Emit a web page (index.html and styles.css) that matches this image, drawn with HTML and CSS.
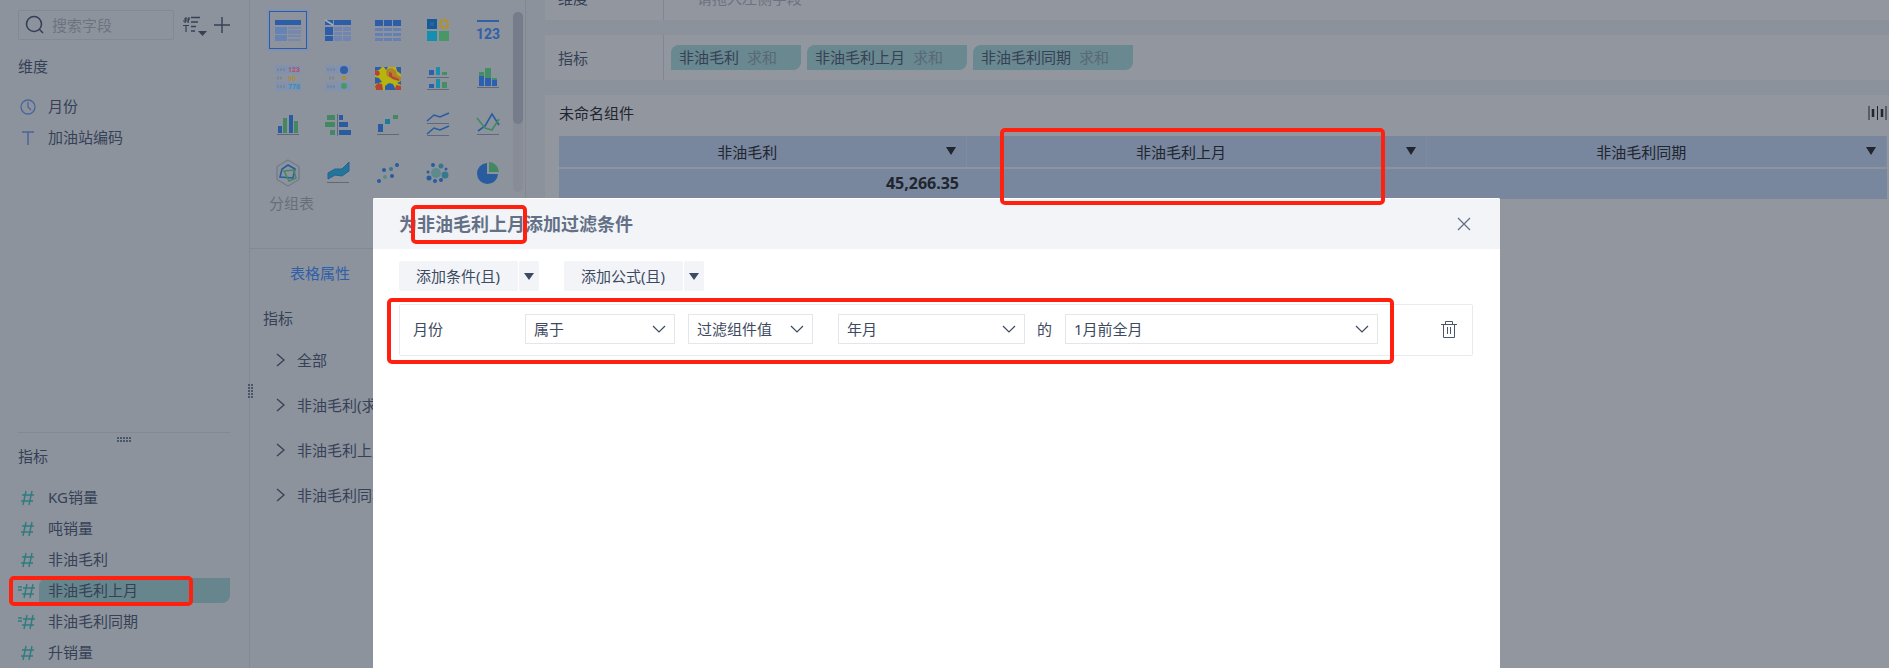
FILE: index.html
```html
<!DOCTYPE html>
<html lang="zh-CN">
<head>
    <meta charset="UTF-8">
    <meta name="viewport" content="width=device-width, initial-scale=1.0">
    <title>未命名组件</title>
    <link rel="stylesheet" href="styles.css">
</head>
<body>
    <div class="app">
        <!-- fields -->
        <aside class="fields">
            <section class="dimensions">
                <div class="search-row">
                    <div class="search">
                        <svg width="20" height="20" viewBox="0 0 20 20" fill="none" stroke="#364156" stroke-width="1.6"><circle cx="9" cy="9" r="7.500"/><path d="M14 14l4 4"/></svg>
                        <input type="text" placeholder="搜索字段" aria-label="搜索字段">
                    </div>
                    <button class="icon-btn sort" aria-label="排序">
                        <svg width="26" height="22" viewBox="0 0 26 22" fill="none" stroke="#364156"><path d="M3 1L2 7M6 1L5 7M1 3h6M0 5h6M0 9.500h6M3 10v6" stroke-width="1.2"/><path d="M8 1.500h9M8 6h7M8 10.500h5M8 15h4" stroke-width="1.6"/><path d="M15 15h9l-4.500 5z" fill="#364156" stroke="none"/></svg>
                    </button>
                    <button class="icon-btn" aria-label="添加">
                        <svg width="16" height="16" viewBox="0 0 16 16" stroke="#364156" stroke-width="1.4"><path d="M8 0v16M0 8h16"/></svg>
                    </button>
                </div>
                <h2>维度</h2>
                <ul class="field-list dims">
                    <li>
                        <svg width="16" height="16" viewBox="0 0 16 16" fill="none" stroke="#4a659c" stroke-width="1.3"><circle cx="8" cy="8" r="7"/><path d="M8 3v5l3 3"/></svg>
                        <span>月份</span>
                    </li>
                    <li>
                        <svg width="16" height="16" viewBox="0 0 16 16" fill="none" stroke="#4a659c" stroke-width="1.5"><path d="M2 2h12M8 2v13"/></svg>
                        <span>加油站编码</span>
                    </li>
                </ul>
            </section>
            <section class="measures">
                <svg class="grip" viewBox="0 0 15 5"><path d="M0 1h15M0 4h15"/></svg>
                <h2>指标</h2>
                <ul class="field-list">
                    <li><svg class="hash" viewBox="0 0 18 16"><path d="M8 1L5 15M14 1l-3 14M4 5h12M3 11h12"/></svg><span>KG销量</span></li>
                    <li><svg class="hash" viewBox="0 0 18 16"><path d="M8 1L5 15M14 1l-3 14M4 5h12M3 11h12"/></svg><span>吨销量</span></li>
                    <li><svg class="hash" viewBox="0 0 18 16"><path d="M8 1L5 15M14 1l-3 14M4 5h12M3 11h12"/></svg><span>非油毛利</span></li>
                    <li class="selected"><svg class="hash" viewBox="0 0 18 16"><path d="M9 1L6 15M15 1l-3 14M5 5h12M4 11h12M0 4h4M0 7h4"/></svg><span>非油毛利上月</span><i class="mark mark-field"></i></li>
                    <li><svg class="hash" viewBox="0 0 18 16"><path d="M9 1L6 15M15 1l-3 14M5 5h12M4 11h12M0 4h4M0 7h4"/></svg><span>非油毛利同期</span></li>
                    <li><svg class="hash" viewBox="0 0 18 16"><path d="M8 1L5 15M14 1l-3 14M4 5h12M3 11h12"/></svg><span>升销量</span></li>
                </ul>
            </section>
            <svg class="resize" viewBox="0 0 5 15"><path d="M1 0v15M4 0v15"/></svg>
        </aside>

        <!-- chart types and properties -->
        <aside class="props">
            <div class="charts">
                <div class="chart-grid">
                    <button class="active" aria-label="分组表"><svg viewBox="0 0 26 26"><path fill="#2b5da9" d="M0 3h26v5H0z"/><path fill="#6583b4" d="M0 10h12v7H0zM0 18h12v6H0z"/><path fill="#7689ad" d="M13 10h13v2H13zM13 13h13v4H13zM13 18h13v2H13zM13 22h13v2H13z"/></svg></button>
                    <button aria-label="交叉表"><svg viewBox="0 0 26 26"><path fill="#2b5da9" d="M0 3h8v5H0zM9 3h17v5H9zM0 10h8v8H0zM0 19h8v5H0z"/><path stroke="#a5adba" stroke-width="1.500" d="M0 3l8 5"/><path fill="#7185b0" d="M9 10h8v4H9zM18 10h8v4h-8zM9 15h8v3H9zM18 15h8v3h-8zM9 19h8v5H9zM18 19h8v5h-8z"/></svg></button>
                    <button aria-label="明细表"><svg viewBox="0 0 26 26"><path fill="#2b5da9" d="M0 3h8v6H0zM9 3h8v6H9zM18 3h8v6h-8z"/><path fill="#6680b2" d="M0 11h8v3H0zM9 11h8v3H9zM18 11h8v3h-8zM0 16h8v3H0zM9 16h8v3H9zM18 16h8v3h-8zM0 21h8v3H0zM9 21h8v3H9zM18 21h8v3h-8z"/></svg></button>
                    <button aria-label="颜色表"><svg viewBox="0 0 26 26"><path fill="#145c99" d="M2 2h10v10H2z"/><path fill="#315f9f" d="M5 5h4v4H5z"/><path fill="none" stroke="#b1902f" stroke-width="3" stroke-dasharray="2.500 1" d="M15.500 3.500h7v7h-7z"/><path fill="#168eaf" d="M2 14h10v10H2z"/><path fill="#499767" d="M14 14h10v10H14z"/></svg></button>
                    <button aria-label="KPI指标卡"><svg viewBox="0 0 26 26"><path fill="#315fa9" d="M2 3h22v2H2z"/><text x="13" y="22" font-size="14" text-anchor="middle" fill="#315fa9">123</text></svg></button>

                    <button aria-label="文本表"><svg viewBox="0 0 26 26"><path fill="#8092b0" d="M0 0h26v9H0zM0 17h26v9H0z"/><path stroke="#7d8496" stroke-width="3" stroke-dasharray="2 1" d="M2 4.500h8M2 13h6M2 21.500h8"/><g font-size="7"><text x="13" y="7" fill="#b54e61">123</text><text x="13" y="16" fill="#ab8c37">90</text><text x="13" y="24" fill="#318fb7">778</text></g></svg></button>
                    <button aria-label="图标表"><svg viewBox="0 0 26 26"><path fill="#8092b0" d="M0 0h26v9H0zM0 17h26v9H0z"/><path stroke="#7d8496" stroke-width="3" stroke-dasharray="2 1" d="M2 4.500h8M4 13h6M2 21.500h8"/><circle cx="19" cy="5" r="4" fill="#315fa9"/><circle cx="19" cy="13" r="2" fill="#ab8c37"/><circle cx="19" cy="21" r="3" fill="#499767"/></svg></button>
                    <button aria-label="热力图"><svg viewBox="0 0 26 26"><path fill="#b7b30f" d="M0 2h26v23H0z"/><path fill="#2b60a8" d="M0 2h7l-3 3-4 1zM21 2h5v7l-4-3zM0 12l4 1 3 4-7 2zM10 25v-4l4-3 4 1 3 6zM9 2h4l-2 3zM26 16v4l-4-2z"/><path fill="#b3812e" d="M12 4l5-1 4 3 1 4 4 2v4l-7-1-7-4-1-4z"/><path fill="#b24538" d="M14 7l3 1v3l7 3v2l-6-2-4-3zM0 5l4 1 1 3-2 2-3-1zM3 18l4 1 1 6H1l-1-4zM21 20l5 1v4h-6z"/></svg></button>
                    <button aria-label="分区柱形图"><svg viewBox="0 0 26 26"><path fill="#2b60b0" d="M4 5h5v5H4zM4 19h5v4H4z"/><path fill="#198fad" d="M11 2h4v8h-4zM11 14h4v9h-4z"/><path fill="#438f65" d="M17 7h5v3h-5zM17 17h5v6h-5z"/><path stroke="#626879" stroke-width="1" d="M2 12.500h22M2 24.500h22"/></svg></button>
                    <button aria-label="堆积柱形图"><svg viewBox="0 0 26 26"><path fill="#2b60b0" d="M4 11h5v10H4zM10 13h6v8h-6zM17 15h5v6h-5z"/><path fill="#438f65" d="M4 7h5v4H4zM10 3h6v10h-6zM17 13h5v2h-5z"/><path stroke="#626879" d="M2 22.500h22"/></svg></button>

                    <button aria-label="柱形图"><svg viewBox="0 0 26 26"><path fill="#285c9f" d="M3 13h4v7H3zM14 2h4v18h-4z"/><path fill="#438862" d="M8 5h4v15H8zM19 8h4v12h-4z"/><path stroke="#626879" d="M2 21.500h22"/></svg></button>
                    <button aria-label="对比柱形图"><svg viewBox="0 0 26 26"><path fill="#438862" d="M2 2h8v5H2zM0 9h10v5H0zM5 17h5v5H5z"/><path fill="#285c9f" d="M14 2h4v5h-4zM14 9h9v5h-9zM14 17h12v5H14z"/><path stroke="#626879" d="M12.500 1v22"/></svg></button>
                    <button aria-label="瀑布图"><svg viewBox="0 0 26 26"><path fill="#285c9f" d="M3 11h5v8H3z"/><path fill="#1b7b98" d="M10 6h5v5h-5z"/><path fill="#438862" d="M18 2h5v4h-5z"/><path stroke="#626879" d="M2 21.500h22"/></svg></button>
                    <button aria-label="分区折线图"><svg viewBox="0 0 26 26" fill="none"><path stroke="#285c9f" stroke-width="1.500" d="M2 8l7-6 6 2 9-4M2 21l7-6 6 2 9-4"/><path stroke="#626879" d="M2 10.500h22M2 22.500h22"/></svg></button>
                    <button aria-label="折线图"><svg viewBox="0 0 26 26" fill="none"><path stroke="#285c9f" stroke-width="1.600" d="M3 18l7-5 7-12 7 11"/><path stroke="#438862" stroke-width="1.600" d="M2 5l8 10 7 2 7-11"/><path stroke="#626879" d="M2 21.500h22"/></svg></button>

                    <button aria-label="雷达图"><svg viewBox="0 0 26 26" fill="none"><path stroke="#737b89" stroke-width="1.300" d="M13-1l11 6.500v13L13 25 2 18.500v-13z"/><path stroke="#285c9f" stroke-width="1.600" d="M13 4l7 4-2 9-13-1 2-8z"/><path stroke="#438862" stroke-width="1.500" d="M9 10l10-1 2 8-7 3z"/></svg></button>
                    <button aria-label="范围面积图"><svg viewBox="0 0 26 26"><path fill="#217896" stroke="#285c9f" d="M3 12l7-4h7l7-7v9l-7 5-7-1-7 4z"/><path stroke="#626879" d="M2 21.500h22"/></svg></button>
                    <button aria-label="散点图"><svg viewBox="0 0 26 26"><g fill="#285c9f"><circle cx="4" cy="20" r="2"/><circle cx="9" cy="9" r="2"/><circle cx="17" cy="15" r="2"/><circle cx="22" cy="4" r="2"/></g><circle cx="10" cy="16" r="2" fill="#5d8b8b"/><circle cx="16" cy="8" r="2" fill="#36798e"/></svg></button>
                    <button aria-label="聚合气泡图"><svg viewBox="0 0 26 26"><circle cx="11" cy="12" r="5" fill="#5d8b8b"/><g fill="#36798e"><circle cx="16" cy="5" r="2.500"/><circle cx="20" cy="14" r="3.500"/></g><g fill="#285c9f"><circle cx="8" cy="4" r="2"/><circle cx="21" cy="8" r="1.500"/><circle cx="16" cy="19" r="2"/><circle cx="10" cy="20" r="2"/><circle cx="4" cy="17" r="2.500"/><circle cx="3" cy="11" r="1.500"/></g></svg></button>
                    <button aria-label="饼图"><svg viewBox="0 0 26 26"><path fill="#285c9f" d="M12 2v11h11A10.500 10.500 0 1 1 12 2z"/><path fill="#438862" d="M14 1a10.500 10.500 0 0 1 10 10H14z"/></svg></button>
                </div>
                <div class="scrollbar"><div class="thumb"></div></div>
            </div>
            <p class="chart-name">分组表</p>
            <a class="tab" href="#">表格属性</a>
            <h2>指标</h2>
            <ul class="prop-list">
                <li><svg class="chev" viewBox="0 0 10 14"><path d="M1 1l7 6-7 6"/></svg>全部</li>
                <li><svg class="chev" viewBox="0 0 10 14"><path d="M1 1l7 6-7 6"/></svg>非油毛利(求和)</li>
                <li><svg class="chev" viewBox="0 0 10 14"><path d="M1 1l7 6-7 6"/></svg>非油毛利上月</li>
                <li><svg class="chev" viewBox="0 0 10 14"><path d="M1 1l7 6-7 6"/></svg>非油毛利同期</li>
            </ul>
        </aside>

        <!-- canvas -->
        <main class="canvas">
            <div class="shelf shelf-dim">
                <span class="shelf-label">维度</span>
                <span class="shelf-hint">请拖入左侧字段</span>
            </div>
            <div class="shelf">
                <span class="shelf-label">指标</span>
                <div class="chips">
                    <span class="chip">非油毛利<em>求和</em></span>
                    <span class="chip">非油毛利上月<em>求和</em></span>
                    <span class="chip">非油毛利同期<em>求和</em></span>
                </div>
            </div>
            <div class="widget">
                <div class="widget-head">
                    <span>未命名组件</span>
                    <svg width="19" height="14" viewBox="0 0 19 14" stroke="#22272f"><path d="M1 0v14M9.500 0v14M18 0v14"/><path d="M5 3v8M14 3v8" stroke-width="2.500"/></svg>
                </div>
                <table>
                    <colgroup><col class="col-first"><col><col></colgroup>
                    <thead>
                        <tr>
                            <th>非油毛利</th>
                            <th>非油毛利上月<i class="mark mark-col"></i></th>
                            <th>非油毛利同期</th>
                        </tr>
                    </thead>
                    <tbody>
                        <tr><td>45,266.35</td><td></td><td></td></tr>
                    </tbody>
                </table>
            </div>
        </main>
    </div>

    <div class="mask">
        <div class="dialog" role="dialog" aria-labelledby="dialogTitle">
            <div class="dialog-head">
                <h1 id="dialogTitle">为<span class="marked">非油毛利上月<i class="mark mark-title"></i></span>添加过滤条件</h1>
                <button class="icon-btn" aria-label="关闭">
                    <svg width="14" height="14" viewBox="0 0 14 14" stroke="#5f6d83" stroke-width="1.2"><path d="M1 1l12 12M13 1L1 13"/></svg>
                </button>
            </div>
            <div class="dialog-body">
                <div class="toolbar">
                    <div class="split">
                        <button>添加条件(且)</button>
                        <button class="drop" aria-label="更多条件"></button>
                    </div>
                    <div class="split">
                        <button>添加公式(且)</button>
                        <button class="drop" aria-label="更多公式"></button>
                    </div>
                </div>
                <div class="condition">
                    <span class="cond-field">月份</span>
                    <select class="sel-op" aria-label="条件"><option>属于</option></select>
                    <select class="sel-type" aria-label="值类型"><option>过滤组件值</option></select>
                    <select class="sel-widget" id="widget" aria-label="过滤组件"><option>年月</option></select>
                    <label for="offset">的</label>
                    <select class="sel-offset" id="offset"><option>1月前全月</option></select>
                    <button class="icon-btn trash" aria-label="删除">
                        <svg width="16" height="18" viewBox="0 0 16 18" fill="none" stroke="#4a566c"><path d="M0 4.500h16M4.500 4V1.500h7V4M2.500 5v12.500h11V5M6.500 7v7M9.500 7v7"/></svg>
                    </button>
                    <i class="mark mark-cond"></i>
                </div>
            </div>
        </div>
    </div>
</body>
</html>
```

FILE: styles.css
```css
* {
    box-sizing: border-box;
}

body {
    margin: 0;
    font-family: "Noto Sans", "Noto Sans CJK SC", sans-serif;
    font-size: 15px;
    line-height: 20px;
    color: #364156;
    background: #8c939d;
    overflow: hidden;
}

h1, h2, p, ul {
    margin: 0;
    padding: 0;
}

h2 {
    font-size: 15px;
    font-weight: normal;
}

ul {
    list-style: none;
}

button, input, select {
    font: inherit;
    color: inherit;
    margin: 0;
}

.app {
    display: flex;
    height: 100vh;
}

.icon-btn {
    display: flex;
    padding: 0;
    border: none;
    background: none;
    cursor: pointer;
}

/* fields */
.fields {
    position: relative;
    display: flex;
    flex-direction: column;
    flex: 0 0 249px;
    padding: 0 19px 0 18px;
    border-right: 1px solid #828994;
}

.dimensions {
    flex: 1;
    padding-top: 10px;
}

.search-row {
    display: flex;
    align-items: center;
    height: 30px;
    margin-bottom: 16px;
}

.search {
    display: flex;
    align-items: center;
    gap: 7px;
    width: 156px;
    height: 30px;
    padding: 0 6px;
    margin-right: 9px;
    border: 1px solid #828994;
    border-radius: 2px;
}

.search input {
    width: 100px;
    padding: 0;
    border: none;
    background: none;
    outline: none;
}

.search input::placeholder {
    color: #6c7380;
}

.sort {
    margin-right: 5px;
    padding-top: 4px;
}

.field-list.dims {
    padding-top: 15px;
}

.field-list li {
    position: relative;
    display: flex;
    align-items: center;
    height: 31px;
}

.field-list svg {
    flex: none;
    margin: 0 4px 0 2px;
}

.field-list span {
    flex: 1;
    height: 25px;
    line-height: 25px;
    padding-left: 8px;
}

.field-list .hash {
    width: 18px;
    height: 16px;
    margin: 0 3px 0 0;
    fill: none;
    stroke: #2f7c7e;
    stroke-width: 1.4;
}

.field-list .hash + span {
    padding-left: 9px;
}

.field-list .selected span {
    background: #66858d;
    border-radius: 8px 0 8px 0;
}

.measures {
    flex: 0 0 236px;
    border-top: 1px solid #828994;
}

.measures h2 {
    padding: 4px 0 16px;
}

.grip, .resize {
    display: block;
    fill: none;
    stroke: #4b5568;
    stroke-width: 2;
    stroke-dasharray: 2 1;
}

.grip {
    width: 15px;
    height: 5px;
    margin: 4px auto 0;
}

.resize {
    position: absolute;
    right: -4px;
    top: 384px;
    width: 5px;
    height: 15px;
}

/* properties */
.props {
    flex: 0 0 276px;
    border-right: 1px solid #828994;
    white-space: nowrap;
}

.charts {
    display: flex;
    height: 193px;
    padding: 6px 2px 0 13px;
}

.chart-grid {
    display: grid;
    grid-template-columns: repeat(5, 50px);
    grid-auto-rows: 48px;
    place-items: center;
}

.chart-grid button {
    display: flex;
    align-items: center;
    justify-content: center;
    width: 38px;
    height: 38px;
    padding: 0;
    border: none;
    background: none;
}

.chart-grid .active {
    border: 1px solid #2c5ca8;
    box-shadow: 0 0 0 2px #8191ab;
}

.chart-grid svg {
    width: 26px;
    height: 26px;
    flex: none;
    overflow: visible;
    font-family: Roboto, sans-serif;
    font-weight: bold;
}

.scrollbar {
    width: 10px;
    height: 180px;
    margin-top: 6px;
    border-radius: 5px;
    background: #888c97;
}

.thumb {
    height: 112px;
    border-radius: 5px;
    background: #777c8a;
}

.chart-name {
    height: 56px;
    padding-left: 19px;
    border-bottom: 1px solid #828994;
    color: #686f7c;
}

.tab {
    display: block;
    padding: 14px 40px;
    color: #2f5fa8;
    text-decoration: none;
}

.props h2 {
    height: 40px;
    padding: 11px 13px;
}

.prop-list li {
    display: flex;
    align-items: center;
    gap: 11px;
    height: 45px;
    padding-left: 26px;
}

.chev {
    width: 10px;
    height: 14px;
    fill: none;
    stroke: #364156;
    stroke-width: 1.3;
}

/* canvas */
.canvas {
    display: flex;
    flex-direction: column;
    flex: 1;
    gap: 15px;
    padding-left: 19px;
    background: #8b929b;
}

.shelf {
    display: flex;
    align-items: center;
    height: 45px;
    background: #92969f;
}

/* scrolled partly out of view */
.shelf-dim {
    margin-top: -25px;
}

.shelf-label {
    display: flex;
    align-items: center;
    width: 119px;
    height: 100%;
    padding-left: 13px;
    border-right: 1px solid #808791;
}

.shelf-hint {
    padding-left: 33px;
    color: #6c7380;
}

.chips {
    display: flex;
    gap: 6px;
    padding-left: 7px;
}

.chip {
    padding: 0 24px 0 8px;
    line-height: 25px;
    background: #69888f;
    border-radius: 8px 0 8px 0;
}

.chip em {
    margin-left: 8px;
    font-style: normal;
    color: #5a6877;
}

.widget {
    flex: 1;
    padding: 0 2px 0 14px;
    background: #92969f;
    color: #20252e;
}

.widget-head {
    display: flex;
    justify-content: space-between;
    align-items: center;
    height: 36px;
    margin-bottom: 5px;
}

table {
    width: 100%;
    table-layout: fixed;
    border-collapse: collapse;
    border-top: 1px solid #79869a;
}

.col-first {
    width: 407px;
}

th {
    position: relative;
    height: 31px;
    padding: 0 30px 0 0;
    font-weight: normal;
    background: #78869e;
    border-right: 1px solid #7f8ba0;
    border-bottom: 2px solid #8d94a0;
}

th::after {
    content: "";
    position: absolute;
    right: 10px;
    top: 10px;
    border: 5px solid transparent;
    border-top: 8px solid #20252e;
    border-bottom: none;
}

td {
    height: 31px;
    padding: 0 7px 1px 0;
    font-size: 16px;
    font-weight: bold;
    text-align: right;
    background: #78869e;
}

/* dialog */
.mask {
    position: fixed;
    inset: 0;
    z-index: 10;
    display: flex;
    padding: 198px 389px 0 373px;
    pointer-events: none;
}

.dialog {
    flex: 1;
    color: #3d4a60;
    background: #fff;
    border-radius: 2px 2px 0 0;
    pointer-events: auto;
}

.dialog-head {
    display: flex;
    align-items: center;
    justify-content: space-between;
    height: 51px;
    padding: 0 29px 0 26px;
    background: #f2f4f8;
    border-top: 1px solid #fff;
    border-radius: 2px 2px 0 0;
}

h1 {
    font-size: 18px;
    color: #637086;
}

.marked {
    position: relative;
}

.dialog-body {
    padding: 12px 27px 0 26px;
}

.toolbar {
    display: flex;
    gap: 25px;
    margin-bottom: 13px;
}

.split {
    display: flex;
    gap: 1px;
}

.split button {
    height: 30px;
    padding: 0 18px 0 17px;
    border: none;
    border-radius: 2px;
    background: #f2f4f8;
    cursor: pointer;
}

.split .drop {
    width: 20px;
    padding: 0 5px;
}

.drop::before {
    content: "";
    display: block;
    border: 5px solid transparent;
    border-top: 7px solid #3d4a60;
    border-bottom: none;
}

.condition {
    position: relative;
    display: flex;
    align-items: center;
    height: 52px;
    padding: 0 15px 2px 13px;
    border: 1px solid #e8eaee;
    border-radius: 2px;
}

.cond-field {
    width: 112px;
}

select {
    height: 30px;
    padding: 0 30px 0 8px;
    border: 1px solid #e4e6ea;
    border-radius: 0;
    appearance: none;
    background: #fff url("data:image/svg+xml,%3Csvg xmlns='http://www.w3.org/2000/svg' width='14' height='8' fill='none' stroke='%233d4a60' stroke-width='1.2'%3E%3Cpath d='M1 1l6 6 6-6'/%3E%3C/svg%3E") no-repeat right 8px center;
}

.sel-op {
    width: 150px;
    margin-right: 13px;
}

.sel-type {
    width: 125px;
    margin-right: 25px;
}

.sel-widget {
    width: 187px;
}

.condition label {
    padding: 0 13px 0 12px;
}

.sel-offset {
    flex: 1;
    margin-right: 63px;
}

/* red highlight boxes */
.mark {
    position: absolute;
    z-index: 20;
    border: 4px solid #ff2010;
    border-radius: 5px;
    pointer-events: none;
}

.mark-title {
    top: -7px;
    bottom: -8px;
    left: -6px;
    right: -2px;
}

.mark-cond {
    top: -7px;
    bottom: -9px;
    left: -13px;
    right: 78px;
}

.mark-col {
    top: -9px;
    left: 33px;
    right: 41px;
    height: 77px;
}

.mark-field {
    top: 1px;
    bottom: 0;
    left: -9px;
    right: 37px;
}
```
